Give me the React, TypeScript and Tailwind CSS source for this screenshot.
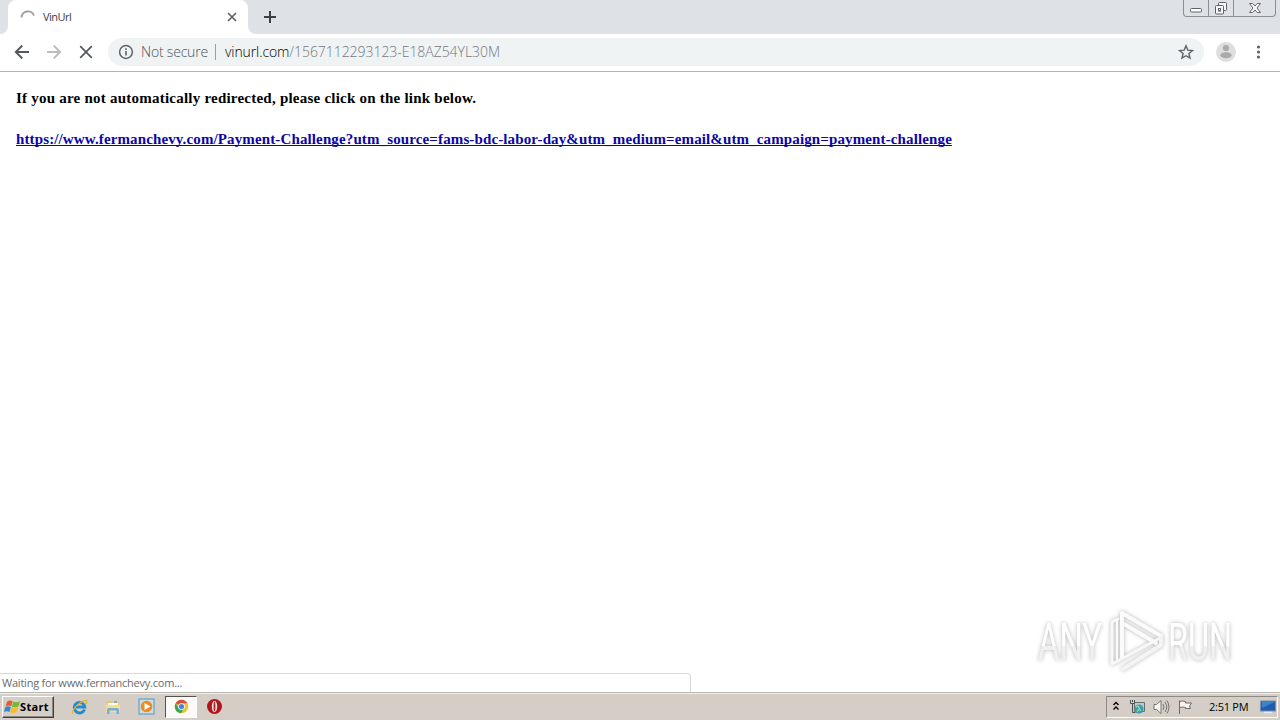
const TabStrip = () => {
  return (
    <header className="flex h-[34px] bg-[#dee1e6]">
      <div className="w-2 bg-white">
        <div className="h-full rounded-br-lg bg-[#dee1e6]" />
      </div>
      <div className="flex w-[240px] items-center rounded-t-lg bg-white pl-3 pr-[10px]">
        <svg width="16" height="16" viewBox="0 0 16 16" fill="none">
          <path d="M1.6 8.5A6.4 6.4 0 0 1 14 6.6" stroke="#a3a3a3" strokeWidth="1.9" />
        </svg>
        <span className="ml-[7px] flex-1 text-[11px] leading-4 tracking-[-0.5px] text-[#3c4043]">
          VinUrl
        </span>
        <svg width="12" height="12" viewBox="0 0 12 12" stroke="#5f6368" strokeWidth="1.7">
          <path d="M2 2l8 8M10 2l-8 8" />
        </svg>
      </div>
      <div className="w-2 bg-white">
        <div className="h-full rounded-bl-lg bg-[#dee1e6]" />
      </div>
      <svg className="ml-[7px] mt-[10px]" width="14" height="14" viewBox="0 0 14 14" stroke="#3c4043" strokeWidth="2">
        <path d="M7 1v12M1 7h12" />
      </svg>
      <div className="ml-auto mr-1 flex h-[17px] w-[93px] rounded-b-[4px] border border-t-0 border-[#8b8f98]">
        <div className="flex w-[25px] justify-center border-r border-[#8b8f98]">
          <svg width="14" height="16" viewBox="0 0 14 16">
            <rect x="1.5" y="8.5" width="11" height="3.5" rx="1" fill="#fff" stroke="#5e6168" />
          </svg>
        </div>
        <div className="flex w-[25px] justify-center border-r border-[#8b8f98]">
          <svg width="15" height="16" viewBox="0 0 15 16" fill="#f5f6f8" stroke="#5e6168">
            <rect x="4.5" y="2.5" width="8" height="8" rx="1" />
            <rect x="1.5" y="5.5" width="8" height="8.5" rx="1" />
            <rect x="4.5" y="8.5" width="2" height="2.5" />
          </svg>
        </div>
        <div className="flex flex-1 justify-center">
          <svg width="14" height="16" viewBox="0 0 14 16">
            <path
              d="M1.5 3.5h3.2L7 6l2.3-2.5h3.2L9 8l3.5 4.5H9.3L7 10l-2.3 2.5H1.5L5 8z"
              fill="#f7f7f9"
              stroke="#63666d"
            />
          </svg>
        </div>
      </div>
    </header>
  );
};

const Toolbar = () => {
  return (
    <nav className="flex h-[38px] items-center border-b border-[#b3b3b3] bg-white pb-px pl-[14px]">
      <svg width="16" height="16" viewBox="0 0 16 16" fill="none" stroke="#55585c" strokeWidth="1.9">
        <path d="M15 8H2M8.3 1.5L1.8 8l6.5 6.5" />
      </svg>
      <svg className="ml-4" width="16" height="16" viewBox="0 0 16 16" fill="none" stroke="#bcbdbf" strokeWidth="1.9">
        <path d="M1 8h13M7.7 1.5L14.2 8l-6.5 6.5" />
      </svg>
      <svg className="ml-4" width="16" height="16" viewBox="0 0 16 16" stroke="#55585c" strokeWidth="1.7">
        <path d="M2.2 2.2l11.6 11.6M13.8 2.2L2.2 13.8" />
      </svg>
      <div className="ml-[14px] flex h-7 w-[1096px] items-center rounded-full bg-[#f0f3f4] pl-[10px] pr-[10px] text-[14px] font-light">
        <svg width="16" height="16" viewBox="0 0 16 16" fill="none" stroke="#5f6368">
          <circle cx="8" cy="8" r="6.4" strokeWidth="1.5" />
          <path d="M8 7v4.5M8 4.3v1.6" strokeWidth="1.6" />
        </svg>
        <span className="mb-px ml-[7px] w-[67px] whitespace-nowrap tracking-[-0.2px] text-[#4f5358]">Not secure</span>
        <span className="ml-[7px] h-4 w-px bg-[#9a9da1]" />
        <span className="mb-px ml-[9px] whitespace-nowrap tracking-[-0.1px] text-black">vinurl.com</span>
        <span className="mb-px whitespace-nowrap tracking-[-0.05px] text-[#73787e]">/1567112293123-E18AZ54YL30M</span>
        <svg className="ml-auto" width="16" height="16" viewBox="0 0 16 16" fill="none" stroke="#5f6368" strokeWidth="1.4">
          <path d="M8 1.8l1.8 4.3 4.7.4-3.6 3 1.1 4.6L8 11.7l-4 2.4 1.1-4.6-3.6-3 4.7-.4z" />
        </svg>
      </div>
      <svg className="ml-3" width="20" height="20" viewBox="0 0 20 20">
        <circle cx="10" cy="10" r="10" fill="#dedede" />
        <circle cx="10" cy="6" r="3.1" fill="#aaa" />
        <ellipse cx="10" cy="13.2" rx="5.6" ry="3" fill="#aaa" />
      </svg>
      <svg className="ml-5" width="5" height="14" viewBox="0 0 5 14" fill="#5f6368">
        <circle cx="2.5" cy="2" r="1.6" />
        <circle cx="2.5" cy="7" r="1.6" />
        <circle cx="2.5" cy="12" r="1.6" />
      </svg>
    </nav>
  );
};

const Watermark = () => {
  return (
    <svg
      className="absolute right-[36px] top-[530px] overflow-visible drop-shadow-[0_0_2px_#b4b4b4]"
      width="220"
      height="80"
      viewBox="0 0 220 80"
    >
      <defs>
        <linearGradient id="fade" x1="0" y1="0" x2="0" y2="1">
          <stop offset="0.55" stopColor="#ffffff" />
          <stop offset="0.56" stopColor="#f0f0f0" />
        </linearGradient>
      </defs>
      <g fill="url(#fade)" className="font-['Roboto',sans-serif] text-[52px]">
        <text x="14" y="58" textLength="64" lengthAdjust="spacingAndGlyphs">ANY</text>
        <text x="144" y="58" textLength="64" lengthAdjust="spacingAndGlyphs">RUN</text>
      </g>
      <g fill="none" stroke="#fbfbfb" strokeWidth="4" strokeLinejoin="round" strokeLinecap="round">
        <path d="M98 55V11l39 23" />
        <path d="M100 22l32 19" />
        <path d="M94 17l-6 3v42l48-26" strokeWidth="3" stroke="#f8f8f8" />
        <path d="M93 18v39" strokeWidth="2" />
        <path d="M99 67l38-24v-8" stroke="#f4f4f4" />
      </g>
    </svg>
  );
};

const Taskbar = () => {
  return (
    <footer className="flex h-7 items-center border-t border-[#b9b7b2] bg-[#d5cec6] shadow-[inset_0_1px_0_#f3f1ec]">
      <button className="ml-[2px] mt-px flex h-[22px] w-[52px] items-center border border-b-[#404040] border-l-white border-r-[#404040] border-t-white pl-px text-[11px] font-bold tracking-[0.35px] text-black shadow-[inset_-1px_-1px_0_#8a8680]">
        <svg className="shrink-0" width="16" height="16" viewBox="0 0 16 16">
          <path d="M3.2 2.4Q6 .6 8.6 2.3L7.2 7.2Q4.5 5.7 1.6 7.300z" fill="#e85b27" />
          <path d="M9.300 2.600Q12.300 4.200 16 2.200L14.500 7.200Q11.200 9.100 7.900 7.500z" fill="#74b83b" />
          <path d="M1.300 8.100Q4.100 6.600 6.900 8L5.500 12.900Q2.900 11.400 0 13z" fill="#3986d8" />
          <path d="M7.600 8.300Q10.900 9.900 14.200 8L12.700 13.100Q9.400 15 6.200 13.300z" fill="#f4bd27" />
        </svg>
        Start
      </button>

      {/* quick launch */}
      <svg className="ml-[17px]" width="17" height="16" viewBox="0 0 17 16" fill="none">
        <path d="M13.500 10.600A5.300 5.300 0 1 1 13.800 8H5" stroke="#258bcc" strokeWidth="2.900" />
        <path d="M2 14.500C-1 12.500 9 2 15 1.300c2 .2.600 3-.5 4.400" stroke="#e5b538" strokeWidth="1.200" />
      </svg>
      <svg className="ml-[17px]" width="17" height="16" viewBox="0 0 17 16">
        <path d="M1.500 2h5l1 1.500h7V13h-13z" fill="#e9c66b" />
        <path d="M3 4h10v3H3z" fill="#fffbe5" />
        <path d="M1 6h14v7H1z" fill="#f6dd91" />
        <path d="M2 15v-4q0-2 2-2h8q2 0 2 2v4h-2.500v-3.500h-7V15z" fill="#72afd2" />
        <path d="M9 3h3" stroke="#4799c9" strokeWidth="1.200" />
      </svg>
      <svg className="ml-4" width="17" height="17" viewBox="0 0 17 17">
        <rect x="1" y="1" width="15" height="15" fill="#c5dff0" stroke="#4b95c7" />
        <circle cx="8.500" cy="8.500" r="5.800" fill="#f18a17" />
        <path d="M6.500 5l6 3.500-6 3.500z" fill="#fff" />
      </svg>
      <div className="ml-[10px] flex h-[22px] w-8 items-center justify-center border border-b-white border-l-[#55524e] border-r-white border-t-[#55524e] bg-[#fbfaf8]">
        <svg width="15" height="15" viewBox="0 0 16 16">
          <circle cx="8" cy="8" r="7.200" fill="#f3c42e" />
          <path d="M8 8L1.800 4.400A7.200 7.200 0 0 1 14.200 4.400H8z" fill="#dc4a3d" />
          <path d="M1.800 4.400A7.200 7.200 0 0 0 7.500 15.200L11 9.700 8 8 5 9.700z" fill="#43a354" />
          <circle cx="8" cy="8" r="3.600" fill="#fff" />
          <circle cx="8" cy="8" r="2.800" fill="#4784df" />
        </svg>
      </div>
      <svg className="ml-[9px]" width="17" height="17" viewBox="0 0 17 17">
        <circle cx="8.500" cy="8.500" r="7.500" fill="#b3151a" />
        <ellipse cx="8.500" cy="8.500" rx="2.700" ry="5.800" fill="#f0dfda" />
        <ellipse cx="8.500" cy="8.500" rx="0.900" ry="5" fill="#9b2a2c" />
      </svg>

      {/* notification area */}
      <div className="ml-auto mr-[2px] mt-px flex h-[22px] w-[172px] items-center border border-b-white border-l-[#8d8983] border-r-white border-t-[#8d8983]">
        <svg className="ml-[5px]" width="8" height="12" viewBox="0 0 8 12" fill="none" stroke="#000" strokeWidth="1.400">
          <path d="M1.500 4L4 1.500l2.500 2.500M1.500 8.500L4 6l2.500 2.500" />
        </svg>
        <svg className="ml-[9px]" width="17" height="16" viewBox="0 0 17 16">
          <path d="M5.500 3.500h10v9h-10z" fill="#b7cfd4" stroke="#686f70" />
          <path d="M1.500 1v3.500h4V1M3.500 1v2M3.500 5v8.500h3" fill="none" stroke="#4d504e" />
          <circle cx="10" cy="10" r="4.500" fill="#3d9ab0" />
          <path d="M7 8.500q2-3 3 0t2 3M8 12.500l2-2" fill="none" stroke="#a3d6a1" strokeWidth="1.300" />
        </svg>
        <svg className="ml-[7px]" width="17" height="16" viewBox="0 0 17 16" fill="none" stroke="#77736f">
          <path d="M1 5.500h2.500L8 1.500v13l-4.500-4H1z" fill="#f6f4f1" />
          <path d="M10 5q2 3 0 6M12 3q3.500 5 0 10M14 1.500q4 6.500 0 13" />
        </svg>
        <svg className="ml-[7px]" width="17" height="16" viewBox="0 0 17 16" fill="#f7f5f1" stroke="#6e6a66">
          <path d="M2.500 1.500v13.500M2.500 2.500q3-1 6 0v1.500h6l-2 3 1 2.500H8.500V8.500q-3-1-6 0" />
        </svg>
        <span className="ml-[15px] w-[42px] whitespace-nowrap text-[11px] tracking-[-0.25px] text-black">2:51 PM</span>
        <svg className="ml-[9px]" width="16" height="14" viewBox="0 0 16 14">
          <rect x="0.500" y="1" width="15" height="10" fill="#205dae" stroke="#7690ad" />
          <path d="M1.500 2h13L2 8z" fill="#3f83cd" />
          <path d="M4 12.500h8" stroke="#e8e8e8" strokeWidth="1.500" />
        </svg>
      </div>
    </footer>
  );
};

export default function App() {
  return (
    <div className="flex h-[720px] w-[1280px] flex-col overflow-hidden bg-white font-['Open_Sans','Noto_Sans',sans-serif]">
      <TabStrip />
      <Toolbar />
      <main className="relative flex flex-1 flex-col">
        <div className="px-4 pt-4 font-['Liberation_Serif',serif] text-[15px] font-bold leading-5 text-black">
          <p>
            <span className="whitespace-nowrap tracking-[0.228px]">
              If you are not automatically redirected, please click on the link below.
            </span>
          </p>
          <p className="mt-[21px]">
            <a
              className="whitespace-nowrap tracking-[0.125px] text-[#0b05a8] underline decoration-1 underline-offset-[1px] [text-decoration-skip-ink:none]"
              href="#"
            >
              https://www.fermanchevy.com/Payment-Challenge?utm_source=fams-bdc-labor-day&amp;utm_medium=email&amp;utm_campaign=payment-challenge
            </a>
          </p>
        </div>
        <Watermark />
        <div className="mt-auto flex h-[19px] w-[691px] items-center rounded-tr-[4px] border-r border-t border-[#d8d8d8] bg-white pl-[2px] text-[11px] text-[#686b6e]">
          <span className="whitespace-nowrap tracking-[-0.22px]">Waiting for www.fermanchevy.com...</span>
        </div>
      </main>
      <Taskbar />
    </div>
  );
}
